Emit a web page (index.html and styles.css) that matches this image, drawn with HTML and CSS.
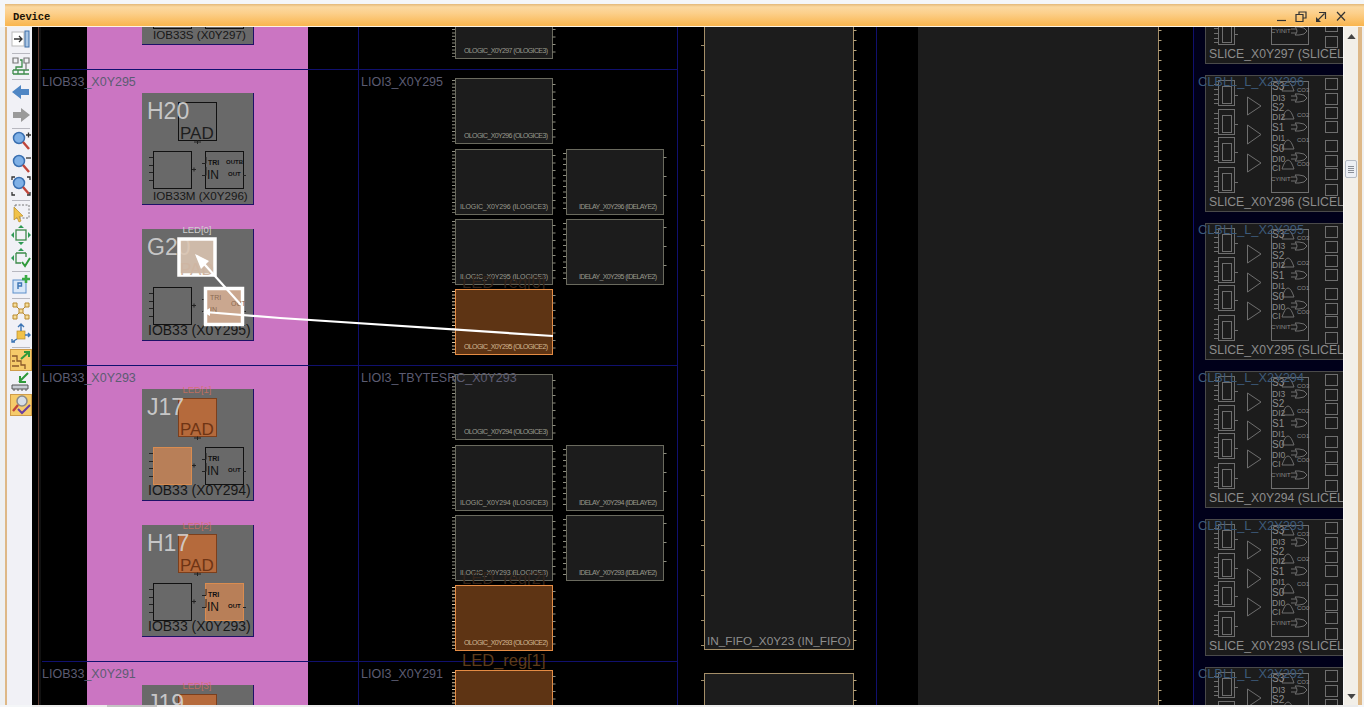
FILE: index.html
```html
<!DOCTYPE html>
<html lang="en">
<head>
<meta charset="utf-8">
<title>Device</title>
<link rel="stylesheet" href="styles.css">
</head>
<body>
<div class="window">
  <header class="titlebar">
    <span class="title">Device</span>
    <div class="winctl">
      <svg class="ctl" viewBox="0 0 12 12"><path class="ctl-s" d="M2 9.500H11"/></svg>
      <svg class="ctl" viewBox="0 0 12 12"><path class="ctl-s" d="M4 3.500V1H11V7H8M1 3.500H8V10.500H1Z"/></svg>
      <svg class="ctl" viewBox="0 0 12 12"><path class="ctl-s" d="M4 1.500H10.500V8M9.500 2.500L2 10"/><path class="ctl-f" d="M1 6V11H6Z"/></svg>
      <svg class="ctl" viewBox="0 0 12 12"><path class="ctl-s" d="M2 1L10 9.500M10 1L2 9.500"/></svg>
    </div>
  </header>
  <div class="main">
    <div class="frame-left"></div>
    <nav class="toolbar">
      <div class="tool"><svg viewBox="0 0 20 20"><rect class="i-page" x="1" y="3" width="12" height="14"/><rect class="i-blue" x="14" y="2" width="4" height="16"/><path class="i-dark" d="M3 10H11M8 7L11 10L8 13"/></svg></div>
      <i class="sep"></i>
      <div class="tool"><svg viewBox="0 0 20 20"><path class="i-green" d="M2 14H18M2 18H18M2 14V18M7 14V18M13 14V18M9 4H11V11H5V14"/><path class="i-grey" d="M2 2H7V7H2ZM13 2H18V7H13ZM15 7V14"/></svg></div>
      <i class="sep"></i>
      <div class="tool"><svg viewBox="0 0 20 20"><path class="f-blue" d="M1 10L10 3V7H18V13H10V17Z"/></svg></div>
      <div class="tool"><svg viewBox="0 0 20 20"><path class="f-grey" d="M19 10L10 3V7H2V13H10V17Z"/></svg></div>
      <i class="sep"></i>
      <div class="tool"><svg viewBox="0 0 20 20"><use href="#lens"/><path class="i-dark" d="M15 4H20M17.500 1.500V6.500"/></svg></div>
      <div class="tool"><svg viewBox="0 0 20 20"><use href="#lens"/><path class="i-dark" d="M15 4H20"/></svg></div>
      <div class="tool"><svg viewBox="0 0 20 20"><use href="#lens"/><path class="i-dark" d="M1 4V1H4M16 1H19V4M1 16V19H4M19 16V19H16"/></svg></div>
      <i class="sep"></i>
      <div class="tool"><svg viewBox="0 0 20 20"><rect class="i-dash" x="4" y="2" width="14" height="13"/><path class="f-yel" d="M3 4L12 13L8 13.500L10 18L8 19L6 14.500L3 17Z"/></svg></div>
      <div class="tool"><svg viewBox="0 0 20 20"><rect class="i-green" x="5" y="5" width="10" height="10"/><path class="f-green" d="M10 0L13 3H7ZM10 20L13 17H7ZM0 10L3 7V13ZM20 10L17 7V13Z"/></svg></div>
      <div class="tool"><svg viewBox="0 0 20 20"><path class="i-green" d="M5 5H15M5 5V15H10M15 5V9"/><path class="f-green" d="M10 0L13 3H7ZM0 10L3 7V13Z"/><path class="i-check" d="M11 14L14 18L19 10"/></svg></div>
      <i class="sep"></i>
      <div class="tool"><svg viewBox="0 0 20 20"><rect class="i-blue2" x="2" y="6" width="13" height="13"/><path class="i-blue3" d="M7 15V9H10.500V12H7"/><path class="i-plus" d="M15 1V9M11 5H19"/></svg></div>
      <i class="sep"></i>
      <div class="tool"><svg viewBox="0 0 20 20"><path class="i-yel" d="M2 2H6V6H2ZM14 2H18V6H14ZM2 14H6V18H2ZM14 14H18V18H14ZM8 8H12V12H8ZM6 6L8 8M14 6L12 8M6 14L8 12M14 14L12 12"/></svg></div>
      <div class="tool"><svg viewBox="0 0 20 20"><rect class="f-yel" x="6" y="8" width="8" height="8"/><path class="i-blue3" d="M10 8V1M7 4L10 1L13 4M14 12H19M17 10L19 12L17 14M6 16L1 19M1 16V19H4"/></svg></div>
      <i class="sep"></i>
      <div class="tool on"><svg viewBox="0 0 20 20"><path class="i-check" d="M10 9L18 2M13 2H18V7"/><path class="i-brown" d="M1 6H6V11H10V15H14V19M1 11H4M1 16H8"/></svg></div>
      <div class="tool"><svg viewBox="0 0 20 20"><path class="i-check" d="M8 10L17 1M9 4V10H15"/><path class="i-grey2" d="M1 13H17V17H1ZM3 17V19M7 17V19M11 17V19M15 17V19"/></svg></div>
      <div class="tool on"><svg viewBox="0 0 20 20"><circle class="i-lens2" cx="11" cy="6" r="5"/><path class="i-red" d="M7 10L2 16"/><path class="i-purple" d="M7 14L11 18L19 10"/></svg></div>
    </nav>
    <main class="canvas">
      <svg class="device" width="1311" height="678" viewBox="32 27 1311 678">
        <defs>
          <g id="lens"><circle class="i-lens" cx="8" cy="7" r="5.500"/><path class="i-red" d="M12 11L18 18"/></g>
          <g id="iobBase"><rect class="iob" width="112" height="112"/><path class="iob-edge" d="M111.500 0V112M0 111.500H112"/></g>
          <path id="padTick" class="wire" d="M55.500 47.500V51M52 49H59"/>
          <rect id="padBox" class="box" x="36.500" y="9.500" width="38" height="38"/>
          <rect id="padSel" class="box-pad" x="36.500" y="9.500" width="38" height="38"/>
          <rect id="lBox" class="box" x="11.500" y="58.500" width="38" height="37"/>
          <rect id="lSel" class="box-sel" x="11.500" y="58.500" width="38" height="37"/>
          <path id="lPins" class="wire" d="M7 64.500H11M7 72.500H11M7 79.500H11M7 87.500H11M50 76.500H54M52 74.500V78.500"/>
          <rect id="rBox" class="box" x="63.500" y="58.500" width="38" height="37"/>
          <rect id="rSel" class="box-sel" x="63.500" y="58.500" width="38" height="37"/>
          <g id="rPins"><path class="wire" d="M60 70.500H64V64M60 82.500H64V74M101 82.500H104"/><text class="tri" x="66" y="72">TRI</text><text class="in" x="65" y="86">IN</text><text class="out" x="86" y="83">OUT</text></g>
          <g id="lgTile"><rect class="lg" x=".5" y=".5" width="97" height="65"/><path class="tick" d="M-1.500 2V64"/><path class="tick-s" d="M99 6V64"/></g>
          <g id="dlTile"><rect class="lg" x=".5" y=".5" width="97" height="65"/><path class="tick-m" d="M-1.500 4V64"/><path class="tick-l" d="M99 8V64"/></g>
          <g id="olSel"><rect class="lg-sel" x=".5" y=".5" width="97" height="65"/><path class="tick-c" d="M-1.500 2V64"/><path class="tick-s" d="M99 6V64"/></g>
          <g id="ff"><rect class="sl" x=".5" y=".5" width="16" height="25"/><rect class="sl" x="4.500" y="6.500" width="9" height="17"/><path class="sl" d="M-4 4.500H1M-4 9.500H1M-4 14.500H1M-4 19.500H1M-4 23.500H1M16 15.500H20"/></g>
          <g id="gate"><path class="sl" d="M0 9Q3 0 6 0Q9 0 12 9Z"/></g>
          <g id="xor"><path class="sl" d="M0 0Q4 4 0 8H4Q10 8 12 4Q10 0 4 0ZM-4 2H1M-4 6H1"/></g>
          <g id="tile-cell"><rect class="sl" x=".5" y=".5" width="12" height="11"/></g>
          <g id="slice">
            <rect class="slice-bg" x=".5" y=".5" width="200" height="136"/>
            <use href="#ff" x="13" y="5"/><use href="#ff" x="13" y="34"/><use href="#ff" x="13" y="62"/><use href="#ff" x="13" y="92"/>
            <path class="sl" d="M42.500 22L56 31L42.500 40ZM42.500 50L56 59.500L42.500 69ZM42.500 79L56 88L42.500 97Z"/>
            <rect class="sl" x="66.500" y="6.500" width="37" height="111"/>
            <use href="#gate" x="77" y="7"/><use href="#xor" x="90" y="19"/><use href="#gate" x="77" y="35"/><use href="#xor" x="90" y="48"/><use href="#gate" x="77" y="65"/><use href="#xor" x="90" y="78"/><use href="#gate" x="77" y="85"/><use href="#xor" x="90" y="100"/>
            <text class="s-l" x="67" y="15">S3</text><text class="s-m" x="67" y="26">DI3</text><text class="s-l" x="67" y="36">S2</text><text class="s-m" x="67" y="45">DI2</text><text class="s-l" x="67" y="56">S1</text><text class="s-m" x="67" y="66">DI1</text><text class="s-l" x="67" y="77">S0</text><text class="s-m" x="67" y="87">DI0</text><text class="s-m" x="67" y="96">CI</text><text class="s-s" x="66" y="106">CYINIT</text>
            <text class="s-s" x="92" y="17">CO3</text><text class="s-s" x="92" y="42">CO2</text><text class="s-s" x="92" y="67">CO1</text><text class="s-s" x="92" y="91">CO0</text>
            <use href="#tile-cell" x="120" y="3"/><use href="#tile-cell" x="120" y="18"/><use href="#tile-cell" x="120" y="32"/><use href="#tile-cell" x="120" y="46"/><use href="#tile-cell" x="120" y="65"/><use href="#tile-cell" x="120" y="80"/><use href="#tile-cell" x="120" y="93"/><use href="#tile-cell" x="120" y="109"/>
          </g>
        </defs>

        <rect class="pink" x="87" y="27" width="221" height="678"/>
        <rect class="navy-bg" x="1193" y="27" width="150" height="678"/>
        <path class="rail" d="M38.500 27V705"/><path class="rail2" d="M40 27V705"/>
        <path class="grid" d="M358.500 27V705M677.500 27V705M876.500 27V705M1193.500 27V705M42 69.500H678M42 365.500H678M42 661.500H678"/>

        <rect class="fifo" x="704.500" y="20" width="149" height="629.500"/>
        <path class="fifo-tl" d="M702.500 20V650"/><path class="fifo-tr" d="M855 20V650"/>
        <rect class="fifo" x="704.500" y="673.500" width="149" height="60"/>
        <path class="fifo-tl" d="M702.500 680V705"/><path class="fifo-tr" d="M855 680V705"/>
        <rect class="bram" x="918" y="20" width="240" height="700"/>
        <path class="bram-edge" d="M1158.500 20V705"/><path class="fifo-tr" d="M1160 20V705"/>
        <text class="fifo-t" x="707" y="645">IN_FIFO_X0Y23 (IN_FIFO)</text>

        <g transform="translate(455,-7)"><use href="#lgTile"/><text class="lt" x="9" y="60" textLength="84">OLOGIC_X0Y297 (OLOGICE3)</text></g>
        <g transform="translate(455,78)"><use href="#lgTile"/><text class="lt" x="9" y="60" textLength="84">OLOGIC_X0Y296 (OLOGICE3)</text></g>
        <g transform="translate(455,149)"><use href="#lgTile"/><text class="lt" x="5" y="60" textLength="88">ILOGIC_X0Y296 (ILOGICE3)</text></g>
        <g transform="translate(566,149)"><use href="#dlTile"/><text class="lt" x="13" y="60" textLength="78">IDELAY_X0Y296 (IDELAYE2)</text></g>
        <g transform="translate(455,219)"><use href="#lgTile"/><text class="lt" x="5" y="60" textLength="88">ILOGIC_X0Y295 (ILOGICE3)</text></g>
        <g transform="translate(566,219)"><use href="#dlTile"/><text class="lt" x="13" y="60" textLength="78">IDELAY_X0Y295 (IDELAYE2)</text></g>
        <text class="reg reg-faint" x="462" y="288">LED_reg[0]</text>
        <g transform="translate(455,289)"><use href="#olSel"/><text class="lt-sel" x="9" y="60" textLength="84">OLOGIC_X0Y295 (OLOGICE2)</text></g>
        <g transform="translate(455,374)"><use href="#lgTile"/><text class="lt" x="9" y="60" textLength="84">OLOGIC_X0Y294 (OLOGICE3)</text></g>
        <g transform="translate(455,445)"><use href="#lgTile"/><text class="lt" x="5" y="60" textLength="88">ILOGIC_X0Y294 (ILOGICE3)</text></g>
        <g transform="translate(566,445)"><use href="#dlTile"/><text class="lt" x="13" y="60" textLength="78">IDELAY_X0Y294 (IDELAYE2)</text></g>
        <g transform="translate(455,515)"><use href="#lgTile"/><text class="lt" x="5" y="60" textLength="88">ILOGIC_X0Y293 (ILOGICE3)</text></g>
        <g transform="translate(566,515)"><use href="#dlTile"/><text class="lt" x="13" y="60" textLength="78">IDELAY_X0Y293 (IDELAYE2)</text></g>
        <text class="reg reg-faint" x="462" y="584">LED_reg[2]</text>
        <g transform="translate(455,585)"><use href="#olSel"/><text class="lt-sel" x="9" y="60" textLength="84">OLOGIC_X0Y293 (OLOGICE2)</text></g>
        <text class="reg" x="462" y="666">LED_reg[1]</text>
        <g transform="translate(455,670)"><use href="#olSel"/></g>

        <g transform="translate(142,-67)"><use href="#iobBase"/><use href="#lBox"/><use href="#rBox"/><text class="nm-s" x="11" y="106">IOB33S (X0Y297)</text></g>

        <g transform="translate(142,93)"><use href="#iobBase"/><use href="#padBox"/><use href="#padTick"/><text class="pin" x="5" y="26">H20</text><text class="pad" x="38" y="46">PAD</text><use href="#lBox"/><use href="#lPins"/><use href="#rBox"/><use href="#rPins"/><text class="out" x="84" y="71">OUTB</text><text class="nm-s" x="11" y="107">IOB33M (X0Y296)</text></g>

        <g transform="translate(142,229)"><use href="#iobBase"/><text class="tag" x="55" y="4">LED[0]</text><text class="pin" x="5" y="26">G20</text><use href="#lBox"/><use href="#lPins"/><use href="#rPins"/><text class="nm" x="6" y="106">IOB33 (X0Y295)</text></g>

        <g transform="translate(142,389)"><use href="#iobBase"/><text class="tag-o" x="55" y="4">LED[1]</text><use href="#padSel"/><use href="#padTick"/><text class="pin" x="5" y="26">J17</text><text class="pad pad-o" x="38" y="46">PAD</text><use href="#lSel"/><use href="#lPins"/><use href="#rBox"/><use href="#rPins"/><text class="nm" x="6" y="106">IOB33 (X0Y294)</text></g>

        <g transform="translate(142,525)"><use href="#iobBase"/><text class="tag-o" x="55" y="4">LED[2]</text><use href="#padSel"/><use href="#padTick"/><text class="pin" x="5" y="26">H17</text><text class="pad pad-o" x="38" y="46">PAD</text><use href="#lBox"/><use href="#lPins"/><use href="#rSel"/><use href="#rPins"/><text class="nm" x="6" y="106">IOB33 (X0Y293)</text></g>

        <g transform="translate(142,685)"><use href="#iobBase"/><text class="tag-o" x="55" y="4">LED[3]</text><use href="#padSel"/><text class="pin" x="5" y="26">J19</text></g>

        <g transform="translate(1205,-73)"><use href="#slice"/><text class="sn" x="4" y="131">SLICE_X0Y297 (SLICEL)</text></g>
        <g transform="translate(1205,75)"><use href="#slice"/><text class="sn" x="4" y="131">SLICE_X0Y296 (SLICEL)</text></g>
        <g transform="translate(1205,223)"><use href="#slice"/><text class="sn" x="4" y="131">SLICE_X0Y295 (SLICEL)</text></g>
        <g transform="translate(1205,371)"><use href="#slice"/><text class="sn" x="4" y="131">SLICE_X0Y294 (SLICEL)</text></g>
        <g transform="translate(1205,519)"><use href="#slice"/><text class="sn" x="4" y="131">SLICE_X0Y293 (SLICEL)</text></g>
        <g transform="translate(1205,667)"><use href="#slice"/></g>

        <text class="lb" x="42" y="86">LIOB33_X0Y295</text>
        <text class="lb" x="42" y="382">LIOB33_X0Y293</text>
        <text class="lb" x="42" y="678">LIOB33_X0Y291</text>
        <text class="lb" x="361" y="86">LIOI3_X0Y295</text>
        <text class="lb" x="361" y="382">LIOI3_TBYTESRC_X0Y293</text>
        <text class="lb" x="361" y="678">LIOI3_X0Y291</text>
        <text class="cl" x="1198" y="86">CLBLL_L_X2Y296</text>
        <text class="cl" x="1198" y="234">CLBLL_L_X2Y295</text>
        <text class="cl" x="1198" y="382">CLBLL_L_X2Y294</text>
        <text class="cl" x="1198" y="530">CLBLL_L_X2Y293</text>
        <text class="cl" x="1198" y="678">CLBLL_L_X2Y292</text>

        <rect class="hl hl-a" x="179" y="239" width="36" height="36"/>
        <text class="pad pad-hl" x="180" y="275">PAD</text>
        <rect class="hl hl-b" x="205.500" y="288.500" width="37" height="36"/>
        <text class="in-hl" x="210" y="300">TRI</text><text class="in-hl" x="210" y="312">IN</text><text class="in-hl" x="231" y="306">OUT</text>
        <path class="route" d="M553 336L280 318L205 312"/>
        <path class="route" d="M241 305L197 256"/>
        <path class="head" d="M195 254L209 261L201 269Z"/>
        <path class="head" d="M203 312L210 308V316Z"/>
      </svg>
    </main>
    <aside class="scrollbar">
      <svg class="arrow" viewBox="0 0 10 6"><path d="M5 0L10 6H0Z"/></svg>
      <div class="thumb"><i></i><i></i><i></i><i></i></div>
      <svg class="arrow" viewBox="0 0 10 6"><path d="M5 6L10 0H0Z"/></svg>
    </aside>
    <div class="frame-right"></div>
  </div>
  <footer class="statusline"><i class="hthumb"></i></footer>
</div>
</body>
</html>
```
FILE: styles.css
```css
* { box-sizing: border-box; }
html, body { margin: 0; height: 100%; overflow: hidden; background: #f4f6f8; }
.window { width: 1364px; height: 707px; display: flex; flex-direction: column; }

.titlebar {
  flex: none; display: flex; align-items: center; justify-content: space-between;
  margin: 4px 0 0 5px; padding: 4px 13px 0 8px; width: 1359px;
  height: 23px; background: linear-gradient(#e3b878 0, #fbd9a0 3px, #fcd08c 9px, #f9b54e 100%);
  border-bottom: 1px solid #fdf4e4;
}
.title { font: bold 10.500px "Liberation Mono", monospace; color: #1c1408; letter-spacing: -.1px; }
.winctl { display: flex; gap: 8px; align-items: center; margin-right: 4px; }
.ctl { width: 12px; height: 12px; display: block; }
.ctl-s { fill: none; stroke: #333; stroke-width: 1.200; }
.ctl-f { fill: #333; }

.main { flex: 1; display: flex; min-height: 0; }
.frame-left { width: 7px; background: linear-gradient(90deg, #eef0f2 0 5px, #deb887 5px); flex: none; }
.frame-right { width: 6px; background: linear-gradient(90deg, #deb887 0 4px, #f0f0f0 4px); flex: none; }

.toolbar { width: 25px; flex: none; background: #f1f1f6; padding: 1px 0 0 3px; display: flex; flex-direction: column; }
.tool { height: 22.500px; width: 22px; flex: none; display: flex; align-items: center; justify-content: center; }
.tool svg { width: 20px; height: 20px; display: block; }
.tool.on { background: #f6cb6a; border: 1px solid #cf9c4a; }
.sep { display: block; height: 1px; flex: none; margin: 2px 2px 1px 2px; background: #b8b8c0; }

.i-page { fill: #fff; stroke: #bbb; }
.i-blue { fill: #a9c5e4; stroke: #3c6ea8; }
.i-dark { fill: none; stroke: #333; stroke-width: 1.300; }
.i-green { fill: none; stroke: #3d8a4a; stroke-width: 1.300; }
.i-grey { fill: none; stroke: #777; stroke-width: 1.200; }
.f-blue { fill: #4f86c4; }
.f-grey { fill: #9a9a9a; }
.i-lens { fill: #7fb0e6; stroke: #3a6fb0; stroke-width: 1.500; }
.i-lens2 { fill: #d6dde6; stroke: #8a8a8a; stroke-width: 1.500; }
.i-red { fill: none; stroke: #c0453a; stroke-width: 2.400; }
.i-dash { fill: none; stroke: #777; stroke-dasharray: 2 1.500; }
.f-yel { fill: #f1c24a; stroke: #b88c2a; stroke-width: .7; }
.f-green { fill: #2e9a55; }
.i-check { fill: none; stroke: #2f9a3a; stroke-width: 2; }
.i-blue2 { fill: #d9e7f8; stroke: #5d8fca; }
.i-blue3 { fill: none; stroke: #3c74b4; stroke-width: 1.400; }
.i-plus { fill: none; stroke: #3aaa45; stroke-width: 2.600; }
.i-yel { fill: #f6dd9a; stroke: #b98a2e; }
.i-brown { fill: none; stroke: #8b5a2a; stroke-width: 1.300; }
.i-grey2 { fill: #c8ccd4; stroke: #555; }
.i-purple { fill: none; stroke: #6a3fa0; stroke-width: 2; }

.canvas { width: 1311px; flex: none; background: #000; overflow: hidden; }
.device { display: block; font-family: "Liberation Sans", Arial, sans-serif; }

.pink { fill: #cb75c2; }
.navy-bg { fill: #00001a; }
.rail { stroke: #5e3a30; fill: none; }
.rail2 { stroke: #222; fill: none; }
.grid { stroke: #10106e; fill: none; }

.iob { fill: #696969; }
.iob-edge { stroke: #1d1166; fill: none; }
.box { fill: none; stroke: #111; }
.box-pad { fill: #b56a3c; stroke: #7c3f1c; }
.box-sel { fill: #b87f58; stroke: #d98c50; }
.wire { fill: none; stroke: #222; }
.pin { font-size: 23px; fill: #d4d4d4; fill-opacity: .9; }
.pad { font-size: 17px; fill: #1e1e1e; }
.pad-o { fill: #6e3414; }
.pad-hl { fill: #ceb5a2; }
.tri { font-size: 7px; font-weight: bold; fill: #111; }
.in { font-size: 12px; fill: #111; }
.out { font-size: 6px; font-weight: bold; fill: #111; }
.nm-s { font-size: 11.600px; fill: #171717; }
.nm { font-size: 14px; fill: #171717; }
.tag { font-size: 9.500px; fill: #cfcfcf; text-anchor: middle; }
.tag-o { font-size: 9.500px; fill: #d9705c; text-anchor: middle; fill-opacity: .75; }

.lg { fill: #1c1c1c; stroke: #6a6a5e; }
.lg-sel { fill: #5e3414; stroke: #e58c44; }
.tick, .tick-c { fill: none; stroke: #8d8d80; stroke-width: 3; stroke-dasharray: 1 2.400; }
.tick-c { stroke: #d8c4a0; }
.tick-s { fill: none; stroke: #8d8d80; stroke-width: 3; stroke-dasharray: 1 6.500; }
.tick-m { fill: none; stroke: #8d8d80; stroke-width: 3; stroke-dasharray: 1 4.500; }
.tick-l { fill: none; stroke: #8d8d80; stroke-width: 3; stroke-dasharray: 1 18; }
.lt { font-size: 7px; fill: #9a9a8e; }
.lt-sel { font-size: 7px; fill: #d2b692; }
.reg { font-size: 16.500px; fill: #5e3c1c; }
.reg-faint { fill: #33241a; }

.fifo { fill: #1c1c1c; stroke: #a48e68; }
.fifo-tl { fill: none; stroke: #9a8a6a; stroke-width: 3; stroke-dasharray: 1 24; }
.fifo-tr { fill: none; stroke: #b8a680; stroke-width: 3; stroke-dasharray: 1 9; }
.fifo-t { font-size: 11.800px; fill: #8e8e8e; }
.bram { fill: #1c1c1c; }
.bram-edge { fill: none; stroke: #a48e68; }

.slice-bg { fill: #1c1c1c; stroke: #4a4a4a; }
.sl { fill: none; stroke: #6e6e6e; }
.s-l { font-size: 10px; fill: #8c8c8c; }
.s-m { font-size: 8.500px; fill: #8c8c8c; }
.s-s { font-size: 6px; fill: #8c8c8c; }
.sn { font-size: 12.200px; fill: #8c8c8c; }

.lb { font-size: 12.500px; fill: #5c5c72; }
.cl { font-size: 12.800px; fill: #3c5a7a; }

.hl { stroke: #fff; stroke-width: 3.500; }
.hl-a { fill: #dcc5b2; fill-opacity: .88; }
.hl-b { fill: #caa78f; }
.in-hl { font-size: 7px; fill: #8a6a52; }
.route { fill: none; stroke: #fff; stroke-width: 2.200; }
.head { fill: #fff; }

.scrollbar { width: 15px; flex: none; background: #f2efe8; border-left: 1px solid #fafafa; display: flex; flex-direction: column; align-items: center; position: relative; padding: 7px 0 6px; justify-content: space-between; }
.arrow { width: 9px; height: 5px; display: block; fill: #444; }
.thumb { position: absolute; top: 133px; left: 1px; width: 12px; height: 18px; background: #eceff4; border: 1px solid #b4bac4; border-radius: 2px; display: flex; flex-direction: column; gap: 1px; justify-content: center; align-items: center; }
.thumb i { display: block; width: 6px; height: 1px; background: #8a8f98; }

.statusline { height: 2px; flex: none; background: #ececec; margin-left: 32px; margin-right: 6px; position: relative; }
.hthumb { position: absolute; left: 75px; top: 0; width: 50px; height: 2px; background: #c4c4c4; }
```
